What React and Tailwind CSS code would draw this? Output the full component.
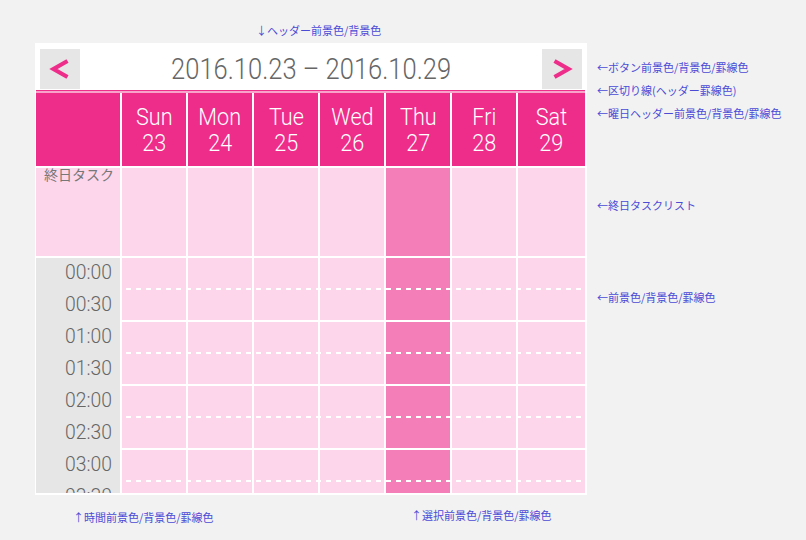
import React from "react";

const PINK = "bg-[#ee2d8a]";
const days = [
  ["Sun", 23],
  ["Mon", 24],
  ["Tue", 25],
  ["Wed", 26],
  ["Thu", 27],
  ["Fri", 28],
  ["Sat", 29],
];
const SELECTED = 4;
const times = ["00:00", "00:30", "01:00", "01:30", "02:00", "02:30", "03:00", "03:30"];

const jp = { fontFamily: '"Noto Sans CJK JP", "Noto Sans", sans-serif' };
const latin = { fontFamily: 'Roboto, "Noto Sans", sans-serif' };

function Note({ children, className = "" }) {
  return (
    <div className={`text-[11px] leading-[14px] text-[#4b4bd6] whitespace-nowrap ${className}`} style={jp}>
      {children}
    </div>
  );
}

function Chevron({ dir }) {
  const pts = dir === "left" ? "27.5,12 13.5,20 27.5,28" : "12.5,12 26.5,20 12.5,28";
  return (
    <svg width="40" height="40" viewBox="0 0 40 40">
      <polyline points={pts} fill="none" stroke="#ee2d8a" strokeWidth="4.2" strokeLinejoin="miter" />
    </svg>
  );
}

function NavButton({ dir }) {
  return (
    <button className="w-[40px] h-[40px] bg-[#e6e6e6] flex items-center justify-center">
      <Chevron dir={dir} />
    </button>
  );
}

function HourRow() {
  return (
    <div className="relative h-[62px] shrink-0">
      <div className="grid grid-cols-[repeat(6,64px)_67px] gap-x-[2px] h-full">
        {days.map((d, i) => (
          <div key={d[0]} className={i === SELECTED ? "bg-[#f47eb8]" : "bg-[#fdd6eb]"} />
        ))}
      </div>
      {/* half-hour divider */}
      <div className="absolute left-[4px] right-[4px] top-[30px] h-[2px] bg-[repeating-linear-gradient(to_right,#ffffff_0_5px,transparent_5px_10px)]" />
    </div>
  );
}

function Calendar() {
  return (
    <div className="w-[552px] bg-white">
      {/* title bar */}
      <div className="h-[47px] flex items-end justify-between pl-[5px] pr-[5px] pb-px">
        <NavButton dir="left" />
        <div className="h-[40px] flex items-center">
          <span
            className="inline-block text-[29px] leading-none font-light text-[#666666] scale-x-[0.88] whitespace-nowrap"
            style={latin}
          >
            2016.10.23 – 2016.10.29
          </span>
        </div>
        <NavButton dir="right" />
      </div>

      <div className="pl-px pr-[2px] pb-[2px]">
        {/* header separator */}
        <div className="h-px bg-[#ee2d8a]" />
        <div className="h-[2px] bg-[#f7a3ca]" />

        {/* weekday header */}
        <div className="grid grid-cols-[84px_repeat(6,64px)_67px] gap-x-[2px] h-[73px]">
          <div className={PINK} />
          {days.map(([name, num]) => (
            <div key={name} className={`${PINK} flex flex-col items-center justify-center text-white`}>
              <span className="inline-block text-[24px] leading-[26px] font-light scale-x-[0.9]" style={latin}>
                {name}
              </span>
              <span className="inline-block text-[24px] leading-[26px] font-light scale-x-[0.9]" style={latin}>
                {num}
              </span>
            </div>
          ))}
        </div>

        {/* all-day tasks */}
        <div className="grid grid-cols-[84px_repeat(6,64px)_67px] gap-x-[2px] h-[88px] mt-[2px]">
          <div className="bg-[#fdd6eb] pl-[8px]">
            <span className="text-[14px] leading-[14px] text-[#777777] block -mt-[1px]" style={jp}>
              終日タスク
            </span>
          </div>
          {days.map((d, i) => (
            <div key={d[0]} className={i === SELECTED ? "bg-[#f47eb8]" : "bg-[#fdd6eb]"} />
          ))}
        </div>

        {/* time grid */}
        <div className="flex gap-x-[2px] h-[235px] overflow-hidden mt-[2px]">
          <div className="w-[84px] shrink-0 bg-[#e6e6e6] flex flex-col">
            {times.map((t) => (
              <div key={t} className="h-[32px] shrink-0 flex justify-end pr-[8px]">
                <span
                  className="inline-block text-[21px] leading-[28px] font-light text-[#666666] scale-x-[0.92] origin-right"
                  style={latin}
                >
                  {t}
                </span>
              </div>
            ))}
          </div>
          <div className="flex flex-col gap-y-[2px]">
            <HourRow />
            <HourRow />
            <HourRow />
            <HourRow />
          </div>
        </div>
      </div>
    </div>
  );
}

export default function App() {
  return (
    <div className="w-[806px] h-[540px] bg-[#f2f2f2] flex overflow-hidden">
      <div className="pl-[35px] flex flex-col">
        <div className="h-[43px] pt-[23px] pl-[221px]">
          <Note>↓ヘッダー前景色/背景色</Note>
        </div>
        <Calendar />
        <div className="grid grid-cols-[376px_auto]">
          <Note className="pl-[38px] mt-[15px]">↑時間前景色/背景色/罫線色</Note>
          <Note className="mt-[13px]">↑選択前景色/背景色/罫線色</Note>
        </div>
      </div>
      <div className="ml-[10px] pt-[60px] flex flex-col">
        <Note>←ボタン前景色/背景色/罫線色</Note>
        <Note className="mt-[9px]">←区切り線(ヘッダー罫線色)</Note>
        <Note className="mt-[9px]">←曜日ヘッダー前景色/背景色/罫線色</Note>
        <Note className="mt-[78px]">←終日タスクリスト</Note>
        <Note className="mt-[78px]">←前景色/背景色/罫線色</Note>
      </div>
    </div>
  );
}
